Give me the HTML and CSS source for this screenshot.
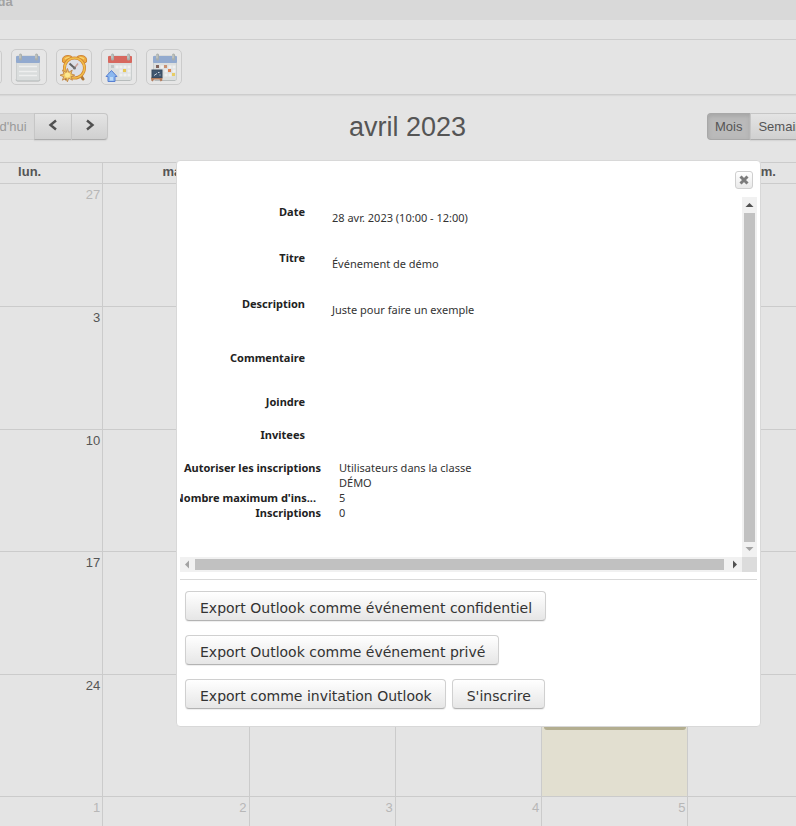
FILE: index.html
```html
<!DOCTYPE html>
<html lang="fr">
<head>
<meta charset="utf-8">
<title>Agenda</title>
<link rel="stylesheet" href="styles.css">
</head>
<body>
<div class="viewport">
<div class="page">
  <header class="crumbs"><a href="#">Agenda</a></header>

  <nav class="actions" aria-label="Actions">
    <button type="button" class="action" aria-label="Ajouter"></button>
    <button type="button" class="action" aria-label="Liste">
      <svg viewBox="0 0 34 34">
        <rect x="4.500" y="6" width="23" height="25" rx="1.500" fill="#d9dddd" stroke="#c9cccc"/>
        <rect x="4" y="6" width="24" height="7" rx="1" fill="#8aa4cd"/>
        <path d="M4 29.500q0 1.500 1.500 1.500h21q1.500 0 1.500-1.500" fill="none" stroke="#b3b8b8"/>
        <path d="M7 16.500h18M7 21.500h18M7 25.500h18" stroke="#eff0f0" stroke-width="1.500"/>
        <path d="M8.500 5v4M24.500 5v4" stroke="#a3a8a5" stroke-width="3" stroke-linecap="round"/>
        <path d="M8 5v3M24 5v3" stroke="#cdd1ce" stroke-linecap="round"/>
      </svg>
    </button>
    <button type="button" class="action" aria-label="Rappel">
      <svg viewBox="0 0 34 34">
        <path d="M11 26l-2 3M24 26l2 3" stroke="#a76b25" stroke-width="3" stroke-linecap="round"/>
        <path d="M5.500 12Q4.500 5.500 11 5.500q4 0 5 2.500Q9 9 7.500 13zM29.500 12Q30.500 5.500 24 5.500q-4 0-5 2.500q6 1 8.500 5z" fill="#f0a52b" stroke="#cc7b24"/>
        <path d="M8 9q2-2 5-1.500M22 7.500q3-.5 5 1.500" fill="none" stroke="#f7d466" stroke-width="1.500"/>
        <circle cx="17.500" cy="18" r="10" fill="#dde0e8" stroke="#d17c20" stroke-width="3"/>
        <circle cx="17.500" cy="18" r="10" fill="none" stroke="#f2ba3a" stroke-width="1.500"/>
        <path d="M12.500 13.500l5 4.500" stroke="#555" stroke-width="2"/>
        <path d="M17.500 18l3.500-4.500" stroke="#c79a90" stroke-width="1.500"/>
        <circle cx="17.500" cy="18" r="1.500" fill="#666"/>
        <path d="M10.500 18.500l1.200 4 3.500-2.500-1.200 3.800 3.800 1.400-3.800 1.500 1.400 3.500-3.700-2-1.300 3.600-1.300-3.600-3.700 2 1.300-3.500L3 25.200l4-1.400L5.500 20l3.700 2.500z" fill="#f7c956" stroke="#c08340"/>
        <circle cx="10.500" cy="25" r="2.500" fill="#ffe98a"/>
      </svg>
    </button>
    <button type="button" class="action" aria-label="Calendrier personnel">
      <svg viewBox="0 0 34 34">
        <rect x="6.500" y="6" width="23" height="24.500" rx="1.500" fill="#dcdfdf" stroke="#c8cccc"/>
        <rect x="6" y="6" width="24" height="7" rx="1" fill="#d65b51"/>
        <path d="M8 30.500h20" stroke="#b3b8b8"/>
        <path d="M13.500 17h3M17.500 17h3M21.500 17h3M25.500 17h3M17.500 21h3M25.500 21h3M17.500 25h3M21.500 25h3M25.500 25h3" stroke="#f1f2f2" stroke-width="3"/>
        <rect x="9" y="15" width="3" height="3" fill="#bcc2c2"/>
        <rect x="21" y="19" width="3" height="3" fill="#e8c445"/>
        <path d="M10.500 5v4M26.500 5v4" stroke="#a3a8a5" stroke-width="3" stroke-linecap="round"/>
        <path d="M10 5v3M26 5v3" stroke="#cdd1ce" stroke-linecap="round"/>
        <path d="M9.500 20.500l5.500 6h-2v5H6v-5H4z" fill="#82b4f0" stroke="#4a75cf" stroke-linejoin="round"/>
        <path d="M8 27h3v3.500H8z" fill="#b9d9fa"/>
      </svg>
    </button>
    <button type="button" class="action" aria-label="Calendrier des cours">
      <svg viewBox="0 0 34 34">
        <rect x="6.500" y="6" width="23" height="24.500" rx="1.500" fill="#dcdfdf" stroke="#c8cccc"/>
        <rect x="6" y="6" width="24" height="7" rx="1" fill="#8aa4cd"/>
        <path d="M8 30.500h20" stroke="#b3b8b8"/>
        <path d="M13.500 17h3M21.500 17h3M25.500 17h3M17.500 21h3M25.500 21h3M17.500 25h3M21.500 25h3" stroke="#f1f2f2" stroke-width="3"/>
        <rect x="9" y="15" width="3" height="3" fill="#76564f"/>
        <rect x="17" y="15" width="3" height="3" fill="#c68765"/>
        <rect x="21" y="19" width="3" height="3" fill="#e17a42"/>
        <rect x="25" y="23" width="3" height="3" fill="#e8cb58"/>
        <path d="M10.500 5v4M26.500 5v4" stroke="#a3a8a5" stroke-width="3" stroke-linecap="round"/>
        <path d="M10 5v3M26 5v3" stroke="#cdd1ce" stroke-linecap="round"/>
        <path d="M6.500 28l-1.500 3M13 28l1.500 3M4 28.500h11.500" stroke="#ae714e" stroke-width="2"/>
        <rect x="5" y="20" width="10" height="7.500" fill="#2d4663" stroke="#263a51"/>
        <path d="M7 25.500l3-2M11 22.500h1.500M12.500 25h1" stroke="#c6d0da"/>
      </svg>
    </button>
  </nav>

  <div class="cal-bar">
    <div class="group">
      <button type="button" class="btn today" disabled>Aujourd'hui</button>
      <button type="button" class="btn arrow" aria-label="Mois précédent"><svg viewBox="0 0 10 12"><path d="M8 1.500L2.500 6 8 10.500"/></svg></button>
      <button type="button" class="btn arrow" aria-label="Mois suivant"><svg viewBox="0 0 10 12"><path d="M2 1.500L7.500 6 2 10.500"/></svg></button>
    </div>
    <h2>avril 2023</h2>
    <div class="group views">
      <button type="button" class="btn active">Mois</button>
      <button type="button" class="btn">Semaine</button>
      <button type="button" class="btn">Jour</button>
    </div>
  </div>

  <table class="calendar">
    <thead><tr><th>lun.</th><th>mar.</th><th>mer.</th><th>jeu.</th><th>ven.</th><th>sam.</th><th>dim.</th></tr></thead>
    <tbody>
      <tr><td class="other">27</td><td class="other">28</td><td class="other">29</td><td class="other">30</td><td class="other">31</td><td>1</td><td>2</td></tr>
      <tr><td>3</td><td>4</td><td>5</td><td>6</td><td>7</td><td>8</td><td>9</td></tr>
      <tr><td>10</td><td>11</td><td>12</td><td>13</td><td>14</td><td>15</td><td>16</td></tr>
      <tr><td>17</td><td>18</td><td>19</td><td>20</td><td>21</td><td>22</td><td>23</td></tr>
      <tr><td>24</td><td>25</td><td>26</td><td>27</td><td class="current">28<div class="event"></div></td><td>29</td><td>30</td></tr>
      <tr><td class="other">1</td><td class="other">2</td><td class="other">3</td><td class="other">4</td><td class="other">5</td><td class="other">6</td><td class="other">7</td></tr>
    </tbody>
  </table>
</div>
</div>

<div class="overlay">
  <section class="dialog" role="dialog" aria-label="Événement">
    <div class="dialog-head">
      <button type="button" class="close" aria-label="Fermer"><svg viewBox="0 0 10 10"><path d="M1.500 1.500l7 7M8.500 1.500l-7 7"/></svg></button>
    </div>
    <div class="pane">
      <div class="content">
        <dl class="fields">
          <div><dt>Date</dt><dd>28 avr. 2023 (10:00 - 12:00)</dd></div>
          <div><dt>Titre</dt><dd>Événement de démo</dd></div>
          <div class="tall"><dt>Description</dt><dd>Juste pour faire un exemple</dd></div>
          <div class="mid"><dt>Commentaire</dt><dd></dd></div>
          <div class="short"><dt>Joindre</dt><dd></dd></div>
          <div class="short"><dt>Invitees</dt><dd></dd></div>
        </dl>
        <dl class="signup">
          <dt>Autoriser les inscriptions</dt><dd>Utilisateurs dans la classe DÉMO</dd>
          <dt class="cut">Nombre maximum d'ins...</dt><dd>5</dd>
          <dt>Inscriptions</dt><dd>0</dd>
        </dl>
      </div>
      <div class="bar vertical"><svg viewBox="0 0 15 15"><path d="M3.500 10l4-4 4 4z" fill="#505050"/></svg><div class="thumb"></div><svg viewBox="0 0 15 15"><path d="M3.500 5l4 4 4-4z" fill="#a3a3a3"/></svg></div>
      <div class="bar horizontal"><svg viewBox="0 0 15 15"><path d="M9 3.500l-4 4 4 4z" fill="#a3a3a3"/></svg><div class="thumb"></div><svg viewBox="0 0 15 15"><path d="M6 3.500l4 4-4 4z" fill="#505050"/></svg></div>
      <div class="corner"></div>
    </div>
    <div class="buttons">
      <div><button type="button">Export Outlook comme événement confidentiel</button></div>
      <div><button type="button">Export Outlook comme événement privé</button></div>
      <div><button type="button">Export comme invitation Outlook</button><button type="button">S'inscrire</button></div>
    </div>
  </section>
</div>
</body>
</html>
```
FILE: styles.css
```css
* { box-sizing: border-box; }

body {
  margin: 0;
  background: #e4e4e4;
  color: #555;
  font: 13px/16px "Liberation Sans", Arial, sans-serif;
}

button { font: inherit; color: inherit; padding: 0; margin: 0; }
svg { display: block; }

.viewport { height: 100vh; overflow: hidden; }

/* The calendar page sits scrolled under the dialog. */
.page { width: calc(100% + 229px); margin: -6px 0 0 -44px; }

.crumbs { height: 26px; padding-left: 9px; background: #d9d9d9; }
.crumbs a { color: #a2a2a2; font-weight: bold; text-decoration: none; }

.actions {
  display: flex;
  gap: 9px;
  margin-top: 19px;
  padding: 9px 10px;
  border: solid #cdcdcd;
  border-width: 1px 0;
  box-shadow: 0 1px 1px #d8d8d8;
}
.action {
  width: 36px;
  height: 36px;
  border: 1px solid #cbcbcb;
  border-radius: 5px;
  background: #e6e6e6;
}
.action svg { width: 34px; height: 34px; opacity: 0.9; }

.cal-bar { display: flex; align-items: center; padding: 18px 0 22px; }
.cal-bar h2 {
  flex: 1;
  margin: 0;
  padding-top: 2px;
  text-align: center;
  font-size: 27px;
  line-height: 25px;
  font-weight: normal;
}
.group { display: flex; }
.views { width: 274px; }
.btn {
  height: 27px;
  padding: 0 8px 0 7px;
  border: 1px solid #c6c6c6;
  border-right-width: 0;
  border-bottom-color: #acacac;
  background: linear-gradient(#e4e4e4, #d0d0d0);
  box-shadow: 0 1px 1px #d6d6d6;
}
.btn:first-child { border-radius: 4px 0 0 4px; }
.btn:last-child { border-right-width: 1px; border-radius: 0 4px 4px 0; }
.btn.today {
  width: 78px;
  padding: 0 8px 0 5px;
  background: #d9d9d9;
  color: #999;
  border-color: #cfcfcf;
  box-shadow: none;
}
.btn.arrow { width: 37px; padding: 0 13px 4px; }
.btn.arrow svg { width: 10px; height: 12px; fill: none; stroke: #505050; stroke-width: 2.4; }
.btn.active {
  border-color: #a8a8a8;
  background: #bababa;
  box-shadow: inset 0 2px 4px #a4a4a4;
}

.calendar { width: 100%; table-layout: fixed; border-collapse: collapse; }
.calendar th, .calendar td { border: 1px solid #cbcbcb; }
.calendar th { height: 21px; padding: 0 0 2px; line-height: 18px; }
.calendar td {
  height: 123px;
  padding: 3px 2px 0 2px;
  vertical-align: top;
  text-align: right;
}
.calendar tr:nth-child(3) td, .calendar tr:nth-child(5) td { height: 122px; }
.calendar .other { color: #b7b7b7; }
.calendar .current { background: #e2dfd0; }
.event { height: 36px; margin-right: -1px; border-radius: 3px; background: #b3ae90; }

.overlay {
  position: fixed;
  inset: 0;
  padding: 160px 35px 0 176px;
}
.dialog {
  padding: 10px 3px 17px;
  border: 1px solid #d8d8d8;
  border-radius: 4px;
  background: #fff;
  color: #333;
}
.dialog-head { display: flex; justify-content: flex-end; padding: 0 4px 8px 0; }
.close {
  display: grid;
  place-items: center;
  width: 18px;
  height: 18px;
  border: 1px solid #cfcfcf;
  border-radius: 3px;
  background: linear-gradient(#fff, #e9e9e9);
}
.close svg { width: 10px; height: 10px; stroke: #7c7c7c; stroke-width: 3; }

.pane { display: grid; grid-template-columns: minmax(0, 1fr) 15px; }
.content {
  min-height: 360px;
  padding-top: 7px;
  overflow: hidden;
  font: 11px/15px "Noto Sans", sans-serif;
}
dl, dd { margin: 0; }
dt { color: #222; font-weight: bold; text-align: right; white-space: nowrap; }
.fields > div { display: grid; grid-template-columns: 125px 1fr; gap: 27px; height: 46px; }
.fields dd { padding-top: 6px; }
.fields .tall { height: 54px; }
.fields .mid { height: 44px; }
.fields .short { height: 33px; }
.signup {
  display: grid;
  grid-template-columns: 150px 150px;
  column-gap: 18px;
  margin-left: -9px;
}
.signup .cut { padding-right: 5px; }

.bar { display: flex; background: #f1f1f1; }
.bar svg { flex: none; width: 15px; height: 15px; }
.thumb { background: #c1c1c1; }
.vertical { flex-direction: column; }
.vertical .thumb { flex: 1; margin: 1px 2px 0; }
.horizontal .thumb { flex: 1; margin: 2px 3px 2px 0; }
.corner { background: #dcdcdc; }

.buttons {
  display: grid;
  gap: 14px;
  margin-top: 7px;
  padding: 11px 5px 0;
  border-top: 1px solid #d9d9d9;
}
.buttons div { display: flex; gap: 6px; }
.buttons button {
  height: 30px;
  padding: 3px 13px 0 14px;
  border: 1px solid #d0d0d0;
  border-bottom-color: #b3b3b3;
  border-radius: 4px;
  background: linear-gradient(#fff, #e6e6e6);
  box-shadow: 0 1px 1px #eee;
  font: 14px/20px "DejaVu Sans", sans-serif;
}
```
